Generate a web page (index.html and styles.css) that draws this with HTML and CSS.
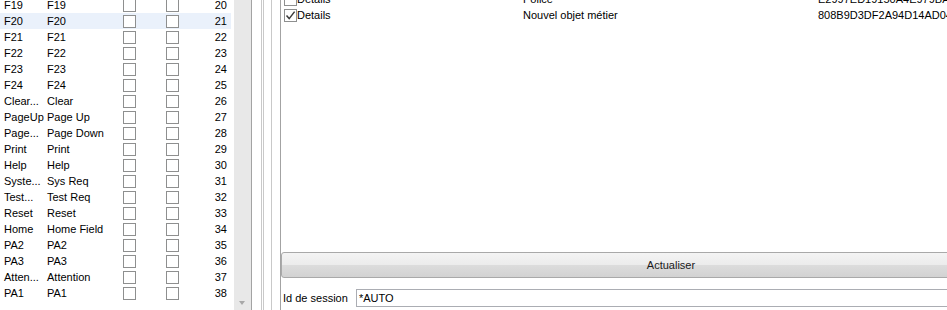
FILE: index.html
```html
<!DOCTYPE html>
<html lang="fr">
<head>
<meta charset="utf-8">
<title>Touches</title>
<link rel="stylesheet" href="styles.css">
</head>
<body>
<div class="app">
  <div class="left">
    <div class="keylist">
      <div class="krow"><span class="c1">F19</span><span class="c2">F19</span><span class="cb"></span><span class="cb cb2"></span><span class="num">20</span></div>
      <div class="krow sel"><span class="c1">F20</span><span class="c2">F20</span><span class="cb"></span><span class="cb cb2"></span><span class="num">21</span></div>
      <div class="krow"><span class="c1">F21</span><span class="c2">F21</span><span class="cb"></span><span class="cb cb2"></span><span class="num">22</span></div>
      <div class="krow"><span class="c1">F22</span><span class="c2">F22</span><span class="cb"></span><span class="cb cb2"></span><span class="num">23</span></div>
      <div class="krow"><span class="c1">F23</span><span class="c2">F23</span><span class="cb"></span><span class="cb cb2"></span><span class="num">24</span></div>
      <div class="krow"><span class="c1">F24</span><span class="c2">F24</span><span class="cb"></span><span class="cb cb2"></span><span class="num">25</span></div>
      <div class="krow"><span class="c1">Clear...</span><span class="c2">Clear</span><span class="cb"></span><span class="cb cb2"></span><span class="num">26</span></div>
      <div class="krow"><span class="c1">PageUp</span><span class="c2">Page Up</span><span class="cb"></span><span class="cb cb2"></span><span class="num">27</span></div>
      <div class="krow"><span class="c1">Page...</span><span class="c2">Page Down</span><span class="cb"></span><span class="cb cb2"></span><span class="num">28</span></div>
      <div class="krow"><span class="c1">Print</span><span class="c2">Print</span><span class="cb"></span><span class="cb cb2"></span><span class="num">29</span></div>
      <div class="krow"><span class="c1">Help</span><span class="c2">Help</span><span class="cb"></span><span class="cb cb2"></span><span class="num">30</span></div>
      <div class="krow"><span class="c1">Syste...</span><span class="c2">Sys Req</span><span class="cb"></span><span class="cb cb2"></span><span class="num">31</span></div>
      <div class="krow"><span class="c1">Test...</span><span class="c2">Test Req</span><span class="cb"></span><span class="cb cb2"></span><span class="num">32</span></div>
      <div class="krow"><span class="c1">Reset</span><span class="c2">Reset</span><span class="cb"></span><span class="cb cb2"></span><span class="num">33</span></div>
      <div class="krow"><span class="c1">Home</span><span class="c2">Home Field</span><span class="cb"></span><span class="cb cb2"></span><span class="num">34</span></div>
      <div class="krow"><span class="c1">PA2</span><span class="c2">PA2</span><span class="cb"></span><span class="cb cb2"></span><span class="num">35</span></div>
      <div class="krow"><span class="c1">PA3</span><span class="c2">PA3</span><span class="cb"></span><span class="cb cb2"></span><span class="num">36</span></div>
      <div class="krow"><span class="c1">Atten...</span><span class="c2">Attention</span><span class="cb"></span><span class="cb cb2"></span><span class="num">37</span></div>
      <div class="krow"><span class="c1">PA1</span><span class="c2">PA1</span><span class="cb"></span><span class="cb cb2"></span><span class="num">38</span></div>
    </div>
    <div class="vscroll"><span class="arrow-down"></span></div>
  </div>
  <div class="splitter"><span class="sline"></span><span class="sline s2"></span><span class="sline s3"></span></div>
  <div class="right">
    <div class="objlist">
      <div class="orow"><span class="oc1"><span class="cb"></span>Details</span><span class="oc2">Police</span><span class="oc3">E2997ED19150A4E979BA10C2</span></div>
      <div class="orow"><span class="oc1"><span class="cb checked"><svg width="11" height="11" viewBox="0 0 11 11"><path d="M1.5 5.5 L4.2 8.6 L9.6 1.6" fill="none" stroke="#3a3a3a" stroke-width="1.5"/></svg></span>Details</span><span class="oc2">Nouvel objet métier</span><span class="oc3">808B9D3DF2A94D14AD0412</span></div>
    </div>
    <div class="btn">Actualiser</div>
    <div class="session"><span class="slabel">Id de session</span><span class="sinput">*AUTO</span></div>
  </div>
</div>
</body>
</html>
```

FILE: styles.css
```css
html, body {
  margin: 0;
  padding: 0;
  background: #ffffff;
  overflow: hidden;
}
body {
  width: 947px;
  height: 310px;
  font-family: "Liberation Sans", Arial, sans-serif;
  font-size: 11px;
  color: #000000;
}
.app {
  display: flex;
  width: 1070px;
  height: 310px;
  overflow: hidden;
}
.left {
  display: flex;
  width: 251px;
  border-right: 1px solid #a3a3a3;
  flex: none;
}
.keylist {
  width: 234px;
  margin-top: -3px;
  flex: none;
}
.krow {
  display: flex;
  align-items: center;
  height: 16px;
  width: 231px;
  line-height: 16px;
}
.krow.sel {
  background: #eaf1fb;
}
.c1 {
  width: 43px;
  padding-left: 4px;
  white-space: nowrap;
  overflow: hidden;
}
.c2 {
  width: 76px;
  white-space: nowrap;
}
.cb {
  display: inline-block;
  box-sizing: border-box;
  width: 13px;
  height: 13px;
  border: 1px solid #8e8f8f;
  background: #ffffff;
  flex: none;
}
.cb2 {
  margin-left: 30px;
}
.num {
  width: 48px;
  text-align: right;
}
.vscroll {
  width: 17px;
  background: #e8e8e8;
  position: relative;
  flex: none;
}
.arrow-down {
  position: absolute;
  left: 5px;
  top: 301px;
  width: 0;
  height: 0;
  border-left: 3.5px solid transparent;
  border-right: 3.5px solid transparent;
  border-top: 4px solid #a8a8a8;
}
.splitter {
  display: flex;
  width: 28px;
  padding-left: 9px;
  box-sizing: border-box;
  flex: none;
}
.sline {
  width: 1px;
  height: 310px;
  background: #c9c9c9;
}
.s2 {
  margin-left: 1px;
}
.s3 {
  margin-left: 7px;
}
.right {
  width: 780px;
  border-left: 1px solid #a3a3a3;
  display: flex;
  flex-direction: column;
  flex: none;
}
.objlist {
  margin-top: -9px;
  height: 261px;
  background: #ffffff;
}
.orow {
  display: flex;
  align-items: center;
  height: 16px;
  line-height: 16px;
  white-space: nowrap;
}
.oc1 {
  display: flex;
  align-items: center;
  width: 239px;
  padding-left: 3px;
}
.oc1 .cb {
  margin-right: 0;
  position: relative;
}
.oc1 .cb svg {
  position: absolute;
  left: 0;
  top: 0;
}
.oc2 {
  width: 295px;
}
.oc3 {
  width: 200px;
}
.btn {
  box-sizing: border-box;
  height: 26px;
  border: 1px solid #a9a9a9;
  border-radius: 3px;
  background: linear-gradient(to bottom, #f4f4f4 0%, #ececec 48%, #dcdcdc 52%, #d2d2d2 100%);
  text-align: center;
  line-height: 24px;
  color: #1a1a1a;
}
.session {
  display: flex;
  align-items: center;
  margin-top: 11px;
  height: 18px;
}
.slabel {
  width: 73px;
  padding-left: 2px;
  flex: none;
}
.sinput {
  box-sizing: border-box;
  flex: 1;
  height: 18px;
  border: 1px solid #abadb3;
  padding-left: 2px;
  line-height: 16px;
}
```
